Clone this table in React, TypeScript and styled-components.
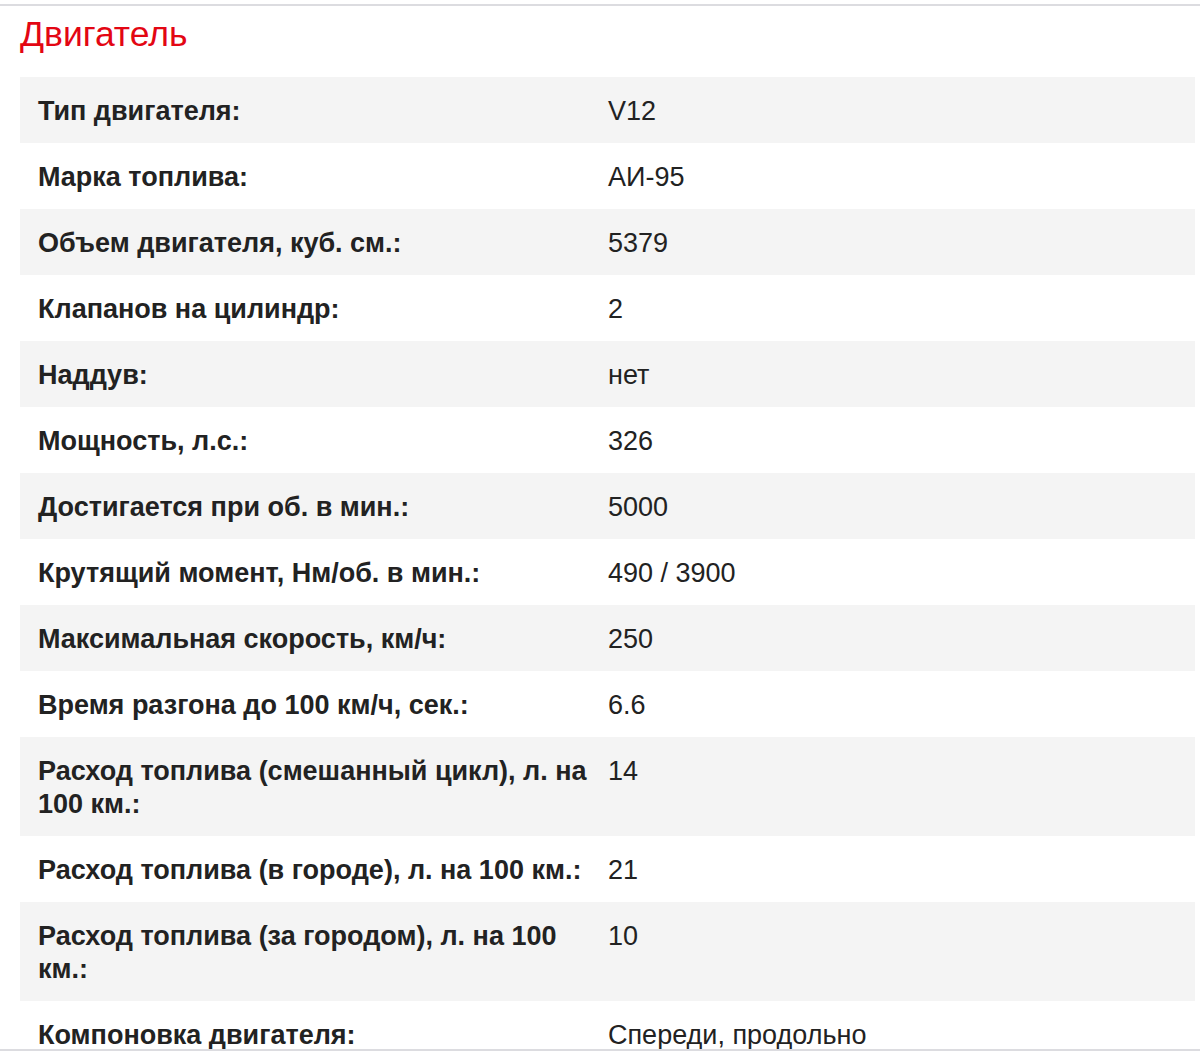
import React from 'react';
import styled, { createGlobalStyle } from 'styled-components';

const GlobalStyle = createGlobalStyle`
  html, body {
    margin: 0;
    padding: 0;
    background: #fff;
  }
  body {
    font-family: "Liberation Sans", Arial, sans-serif;
  }
`;

const specs: [string, string][] = [
  ['Тип двигателя:', 'V12'],
  ['Марка топлива:', 'АИ-95'],
  ['Объем двигателя, куб. см.:', '5379'],
  ['Клапанов на цилиндр:', '2'],
  ['Наддув:', 'нет'],
  ['Мощность, л.с.:', '326'],
  ['Достигается при об. в мин.:', '5000'],
  ['Крутящий момент, Нм/об. в мин.:', '490 / 3900'],
  ['Максимальная скорость, км/ч:', '250'],
  ['Время разгона до 100 км/ч, сек.:', '6.6'],
  ['Расход топлива (смешанный цикл), л. на 100 км.:', '14'],
  ['Расход топлива (в городе), л. на 100 км.:', '21'],
  ['Расход топлива (за городом), л. на 100 км.:', '10'],
  ['Компоновка двигателя:', 'Спереди, продольно'],
];

const App = () => {
  return (
    <>
      <GlobalStyle />
      <Frame>
        <Title>Двигатель</Title>
        <Table>
          {specs.map(([label, value], i) => (
            <Row key={label} $shaded={i % 2 === 0}>
              <Label>{label}</Label>
              <Value>{value}</Value>
            </Row>
          ))}
        </Table>
      </Frame>
    </>
  );
};

const Frame = styled.div`
  margin-top: 4px;
  height: 1043px;
  overflow: hidden;
  border-top: 2px solid #dcdce0;
  border-bottom: 2px solid #dcdce0;
  padding: 0 5px 0 20px;
`;

const Title = styled.h2`
  margin: 0;
  padding-top: 7px;
  height: 71px;
  box-sizing: border-box;
  font-size: 35.5px;
  line-height: 42px;
  font-weight: normal;
  color: #e30613;
`;

const Table = styled.div`
  display: flex;
  flex-direction: column;
`;

const Row = styled.div<{ $shaded: boolean }>`
  display: grid;
  grid-template-columns: 562px 1fr;
  column-gap: 8px;
  padding: 18px 18px 15px;
  background: ${(p) => (p.$shaded ? '#f4f4f4' : '#fff')};
  font-size: 27px;
  line-height: 33px;
  color: #222;
`;

const Label = styled.div`
  font-weight: bold;
`;

const Value = styled.div`
  font-weight: normal;
`;

export default App;
